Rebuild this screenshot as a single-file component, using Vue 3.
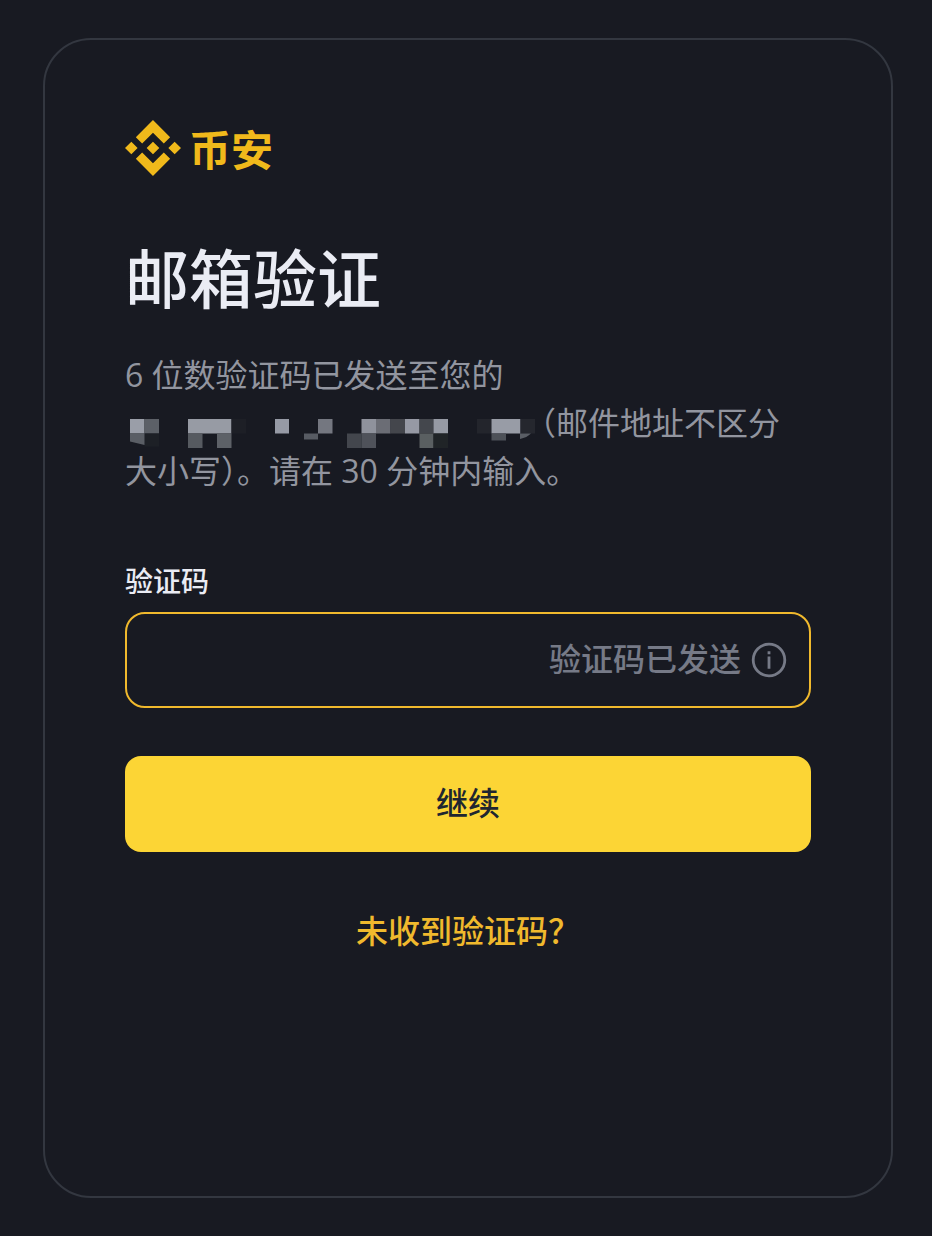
<template>
  <div class="page">
    <main class="card">
      <div class="brand">
        <svg class="brand-icon" viewBox="0 0 24 24" aria-hidden="true">
          <path d="M16.624 13.92l2.718 2.716-7.353 7.353-7.353-7.352 2.717-2.717 4.636 4.66 4.635-4.66zm4.637-4.636L24 12l-2.715 2.716L18.568 12l2.693-2.716zm-9.272 0l2.716 2.692-2.717 2.717L9.272 12l2.716-2.715zm-9.273 0L5.41 12l-2.692 2.692L0 12l2.716-2.716zM11.989.012l7.353 7.329-2.718 2.715-4.635-4.635-4.636 4.66-2.717-2.716L11.989.012z" />
        </svg>
        <span class="brand-name">币安</span>
      </div>

      <h1 class="title">邮箱验证</h1>

      <p class="desc">
        6 位数验证码已发送至您的
        <svg class="masked" viewBox="0 0 399 28" role="img" aria-label="邮箱">
          <rect v-for="(b, i) in blocks" :key="i" :x="b[0]" :y="b[1]" :width="b[2]" :height="b[3]" :fill="b[4]" />
          <path d="M5 14.5h14.5V26L5 22.5z" fill="#5a5e65" />
          <path d="M395 14.500h11q-4 4-11 5.500z" fill="#5a5e65" />
        </svg>（邮件地址不区分大小写）。请在 30 分钟内输入。
      </p>

      <form class="form" @submit.prevent>
        <label class="label" for="code">验证码</label>
        <div class="field">
          <input id="code" v-model="code" class="input" type="text" inputmode="numeric" maxlength="6" autocomplete="one-time-code">
          <span class="sent">验证码已发送</span>
          <svg class="info" viewBox="0 0 36 36" aria-hidden="true">
            <circle cx="18" cy="18" r="15.8" fill="none" stroke="currentColor" stroke-width="2.8" />
            <path d="M16.600 9.300h2.800v3h-2.800zM16.600 14.500h2.800v12.300h-2.800z" fill="currentColor" />
          </svg>
        </div>
        <button class="submit" type="submit">继续</button>
      </form>

      <a class="resend" href="#">未收到验证码？</a>
    </main>
  </div>
</template>

<script setup>
import { ref } from 'vue'

const code = ref('')

// x, y, width, height, colour of each block that hides the address
const blocks = [
  [5, 0, 14.5, 14.5, '#9a9ea8'],
  [19.5, 0, 14.5, 14.5, '#5c6067'],
  [19.5, 14.5, 14.5, 13, '#1d2026'],
  [63, 0, 43.5, 14.5, '#979ba4'],
  [63, 14.5, 14.5, 14.5, '#565a60'],
  [92, 14.5, 14.5, 14.5, '#5d6167'],
  [106.5, 0, 14.5, 14.5, '#1d1f26'],
  [150, 0, 14, 14.5, '#969aa5'],
  [179, 14.5, 14, 6, '#575b63'],
  [193, 0, 14.5, 14.5, '#747780'],
  [222, 14.5, 14.5, 14.5, '#43464d'],
  [236.5, 0, 14.5, 14.5, '#8f929c'],
  [236.5, 14.5, 14.5, 14.5, '#4f525a'],
  [251, 0, 14.5, 14.5, '#6b6d75'],
  [265.5, 0, 14.5, 14.5, '#44464c'],
  [280, 0, 14.5, 14.5, '#9699a4'],
  [294.5, 0, 14, 14.5, '#44474d'],
  [294.5, 14.5, 14, 14.5, '#5a5f61'],
  [308.5, 0, 14.5, 14.5, '#969aa4'],
  [308.5, 14.5, 14.5, 14.5, '#202427'],
  [352, 0, 14.5, 14.5, '#23252c'],
  [366.5, 0, 29, 14.5, '#989ca6'],
  [366.5, 14.5, 14.5, 7, '#4d5158'],
  [395.5, 0, 14.5, 14.5, '#25272e']
]
</script>

<style>
body { margin: 0; background: #181a22; }
</style>

<style scoped>
.page {
  box-sizing: border-box; min-height: 100vh; padding: 38px 39px 38px 43px;
  display: flex; background: #181a22; color: #eaecf4;
  font-family: "Open Sans", "Noto Sans CJK SC", sans-serif;
}
.card {
  flex: 1; min-width: 0; padding: 80px;
  display: flex; flex-direction: column;
  border: 2px solid #333740; border-radius: 48px;
}

.brand { display: flex; align-items: center; gap: 8px; height: 56px; color: #f0b91b; }
.brand-icon { width: 56px; height: 56px; fill: currentColor; }
.brand-name { font-size: 42px; line-height: 56px; font-weight: 700; padding-top: 4px; }

.title { margin: 63px 0 32px; font-size: 64px; line-height: 80px; font-weight: 500; }

.desc { margin: 0; font-size: 32px; line-height: 48px; color: #92959f; }
.masked { width: 399px; height: 28px; overflow: visible; vertical-align: -12px; }

.form { display: flex; flex-direction: column; margin-top: 64px; }
.label { font-size: 28px; line-height: 44px; font-weight: 500; }
.field {
  box-sizing: border-box; height: 96px; margin: 9px 0 48px; padding: 0 22px;
  display: flex; align-items: center; gap: 10px;
  border: 2px solid #f0b92d; border-radius: 20px; color: #767a87;
}
.input {
  flex: 1; min-width: 0; height: 100%; padding: 0;
  border: 0; outline: 0; background: transparent;
  font: inherit; font-size: 32px; color: #eaecf4;
}
.sent { padding-bottom: 2px; font-size: 32px; line-height: 48px; font-weight: 500; }
.info { width: 36px; height: 36px; flex-shrink: 0; }
.submit {
  height: 96px; padding: 0 0 6px; border: 0; border-radius: 16px;
  background: #fcd535; color: #202630; cursor: pointer;
  font: inherit; font-size: 32px; font-weight: 500;
}
.resend {
  align-self: center; margin-top: 55px;
  font-size: 32px; line-height: 48px; font-weight: 500;
  color: #f0b92d; text-decoration: none;
}
</style>
